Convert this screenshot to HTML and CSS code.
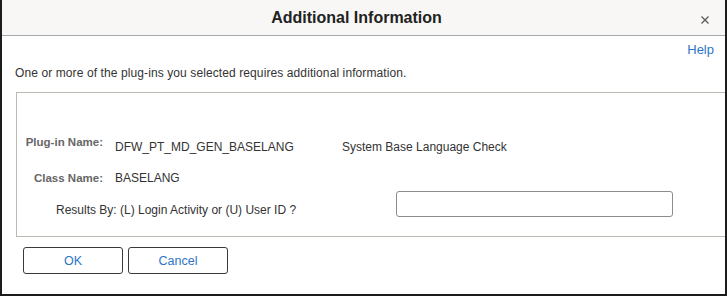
FILE: index.html
```html
<!DOCTYPE html>
<html>
<head>
<meta charset="utf-8">
<link rel="stylesheet" href="styles.css">
</head>
<body>
<div class="dialog">
  <div class="header">
    <span class="spacer"></span>
    <h1 class="title">Additional Information</h1>
    <span class="close">
      <svg width="8" height="8" viewBox="0 0 8 8"><path d="M0.5 0.5 L7.5 7.5 M7.5 0.5 L0.5 7.5" stroke="#5a5a5a" stroke-width="1.3" fill="none"/></svg>
    </span>
  </div>
  <div class="help-row"><a class="help">Help</a></div>
  <p class="intro">One or more of the plug-ins you selected requires additional information.</p>
  <div class="panel">
    <div class="row row-plugin">
      <span class="label">Plug-in Name:</span>
      <span class="value value-low">DFW_PT_MD_GEN_BASELANG</span>
      <span class="desc value-low">System Base Language Check</span>
    </div>
    <div class="row row-class">
      <span class="label">Class Name:</span>
      <span class="value">BASELANG</span>
    </div>
    <div class="row row-results">
      <span class="prompt">Results By: (L) Login Activity or (U) User ID ?</span>
      <input class="field" type="text">
    </div>
  </div>
  <div class="buttons">
    <button class="btn">OK</button>
    <button class="btn">Cancel</button>
  </div>
</div>
</body>
</html>
```

FILE: styles.css
```css
html, body {
  margin: 0;
  padding: 0;
  background: #ffffff;
}
body {
  font-family: "Liberation Sans", Arial, sans-serif;
  font-size: 12px;
  color: #333333;
}
.dialog {
  box-sizing: border-box;
  width: 727px;
  height: 296px;
  border-left: 2px solid #1c1c1c;
  border-right: 2px solid #1c1c1c;
  border-bottom: 2px solid #1c1c1c;
  background: #ffffff;
}
.header {
  height: 35px;
  border-bottom: 1px solid #a9a9a9;
  background: #f8f7f5;
  display: grid;
  grid-template-columns: 1fr auto 1fr;
  align-items: center;
}
.title {
  margin: 0;
  font-size: 16px;
  font-weight: bold;
  color: #222222;
  line-height: 20px;
  margin-right: 14px;
}
.close {
  justify-self: end;
  margin-right: 16px;
  margin-top: 4px;
  display: flex;
}
.help-row {
  display: flex;
  justify-content: flex-end;
  margin-top: 6px;
  padding-right: 11px;
}
.help {
  color: #2d75c5;
  font-size: 13px;
  line-height: 15px;
}
.intro {
  margin: 9px 0 0 13px;
  line-height: 14px;
  letter-spacing: 0.1px;
}
.panel {
  margin: 12px 0 0 14px;
  border-top: 1px solid #bdb9b3;
  border-left: 1px solid #bdb9b3;
  border-bottom: 1px solid #bdb9b3;
  padding: 42px 0 19px 0;
}
.row {
  display: flex;
  align-items: flex-start;
  line-height: 14px;
}
.label {
  width: 86px;
  text-align: right;
  font-weight: bold;
  font-size: 11.5px;
  color: #666666;
  margin-right: 12px;
}
.value {
  width: 227px;
}
.value-low {
  margin-top: 5px;
}
.row-class {
  margin-top: 17px;
}
.row-results {
  margin-top: 6px;
}
.prompt {
  margin-left: 39px;
  width: 340px;
  margin-top: 12px;
}
.field {
  box-sizing: border-box;
  width: 277px;
  height: 26px;
  border: 1px solid #8c8c8c;
  border-radius: 3px;
  margin: 0;
  padding: 0 6px;
  font-family: inherit;
}
.buttons {
  display: flex;
  gap: 5px;
  margin: 10px 0 0 21px;
}
.btn {
  box-sizing: border-box;
  width: 100px;
  height: 27px;
  border: 1px solid #3a3a3a;
  border-radius: 3px;
  background: #ffffff;
  color: #2d75c5;
  font-family: "Liberation Sans", Arial, sans-serif;
  font-size: 12.5px;
  padding: 0;
}
```
